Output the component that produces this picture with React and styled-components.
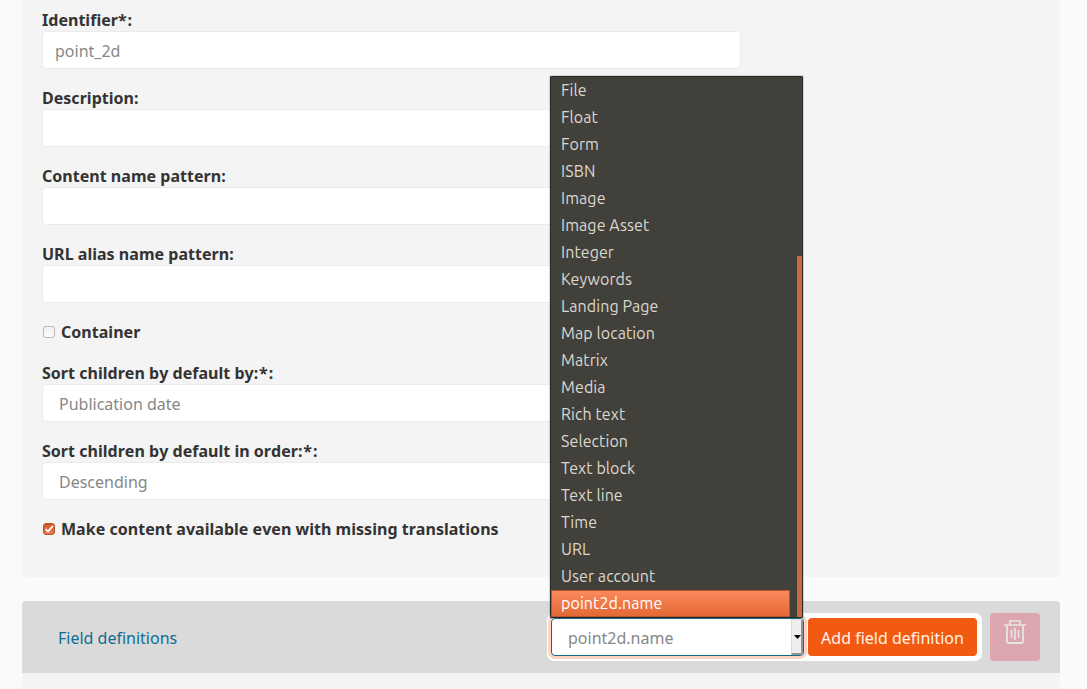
import React from "react";
import styled, { createGlobalStyle, css } from "styled-components";

const GlobalStyle = createGlobalStyle`
  *, *::before, *::after { box-sizing: border-box; }
  body {
    margin: 0;
    background: #fafafa;
    color: #333;
    font: 16px/24px "Noto Sans", sans-serif;
    overflow: hidden;
  }
`;

const Page = styled.main`
  height: 689px;
  padding: 0 27px 0 22px;
  overflow: hidden;
`;

const FormPanel = styled.section`
  height: 577px;
  padding: 7px 20px 0;
  background: #f4f4f4;
  border-radius: 0 0 4px 4px;
`;

const Field = styled.div`
  width: 699px;
  margin-bottom: 16px;
`;

const Label = styled.label`
  display: block;
  height: 24px;
  padding-top: 1px;
  font-weight: 700;
  font-kerning: none;
  letter-spacing: 0.025px;
  white-space: nowrap;
`;

const Required = styled.span`
  letter-spacing: 0.9px;
`;

const Control = styled.div`
  height: 38px;
  padding: 7px ${(p) => (p.$select ? "16px" : "12px")};
  color: #878787;
  background: #fff;
  border: 1px solid #ebebeb;
  border-radius: 4px;
`;

const CheckRow = styled.div`
  display: flex;
  align-items: center;
  gap: 6px;
  height: 24px;
  padding-left: 1px;
  margin-bottom: ${(p) => p.$gap || "0"};
`;

const CheckBox = styled.span`
  display: flex;
  width: 12px;
  height: 12px;
  margin-top: 2px;
  border: 1px solid #b9b9b9;
  border-radius: 3px;
  background: linear-gradient(#f1f1f1, #fdfdfd);
  ${(p) =>
    p.$checked &&
    css`
      border-color: #b0502c;
      background: linear-gradient(#d65624, #e57a50);
    `}
`;

const DefinitionsPanel = styled.section`
  height: 100px;
  margin-top: 24px;
  background: #f4f4f4;
  border-radius: 4px 4px 0 0;
`;

const DefinitionsHeader = styled.header`
  display: flex;
  align-items: center;
  height: 72px;
  padding: 0 20px 0 36px;
  background: #dadada;
  border-radius: 4px 4px 0 0;
`;

const Title = styled.h2`
  flex: 1;
  margin: 0;
  padding-top: 2px;
  color: #0f6d95;
  font-size: 16px;
  font-weight: 400;
`;

const AddGroup = styled.div`
  position: relative;
  display: flex;
  align-items: center;
  gap: 4px;
  width: 435px;
  height: 48px;
  margin-right: 8px;
  padding: 0 5px 0 4px;
  background: #fff;
  border-radius: 7px;
`;

const TypeSelect = styled.div`
  display: flex;
  width: 253px;
  height: 38px;
  color: #878787;
  background: #fff;
  border: 1px solid #146c8c;
  border-radius: 4px;
  box-shadow: 0 0 0 3px #fcd4c1;
  overflow: hidden;
`;

const SelectValue = styled.span`
  flex: 1;
  padding: 7px 16px;
`;

const SelectArrow = styled.span`
  display: flex;
  align-items: center;
  justify-content: center;
  width: 12px;
  padding-left: 1px;
  background: #eeeeee;
  border: solid;
  border-width: 1px 2px 2px 1px;
  border-color: #e3e3e3 #949494 #949494 #dcdcdc;
`;

const AddButton = styled.button`
  width: 169px;
  height: 38px;
  padding: 2px 0 0;
  color: #fff2e9;
  background: #f35a11;
  border: 0;
  border-radius: 4px;
  font: inherit;
  white-space: nowrap;
`;

const DeleteButton = styled.button`
  display: flex;
  justify-content: center;
  width: 50px;
  height: 48px;
  padding: 7px 0 0;
  background: #dca6ae;
  border: 0;
  border-radius: 4px;
`;

const Menu = styled.ul`
  position: absolute;
  left: 3px;
  bottom: 43px;
  width: 253px;
  height: 542px;
  margin: 0;
  padding: 0 12px 0 0;
  list-style: none;
  color: #dcd8cf;
  background: #42403b;
  border: 1px solid #282a29;
  border-radius: 1px;
  box-shadow: 0 0 1px 1px rgba(80, 90, 95, 0.22);
`;

const MenuItem = styled.li`
  height: 27px;
  padding: 1px 0 0 10px;
  line-height: 25px;
  font-family: Ubuntu, "Noto Sans", sans-serif;
  letter-spacing: 0.08px;
  white-space: nowrap;
  ${(p) =>
    p.$active &&
    css`
      padding: 0 0 0 9px;
      color: #fff;
      background: linear-gradient(#fa895c, #e46936);
      border: 1px solid #b75732;
    `}
`;

const MenuScrollbar = styled.span`
  position: absolute;
  top: 179px;
  right: 0;
  bottom: 0;
  width: 5px;
  background: #cb6a41;
`;

const fieldTypes = [
  "File", "Float", "Form", "ISBN", "Image", "Image Asset", "Integer",
  "Keywords", "Landing Page", "Map location", "Matrix", "Media", "Rich text",
  "Selection", "Text block", "Text line", "Time", "URL", "User account",
  "point2d.name",
];

const CheckMark = () => (
  <svg width="10" height="10" viewBox="0 0 10 10" fill="none" stroke="#fff" strokeWidth="1.8">
    <path d="M1.5 5.2 4 7.5 9 1.8" />
  </svg>
);

const TrashIcon = () => (
  <svg width="22" height="24" viewBox="0 0 22 24" fill="none" stroke="#e6e4e4">
    <path d="M0 5H22M6 5V1H16V5" strokeWidth="1.7" />
    <path d="M3 5V21.5Q3 23 4.5 23H17.5Q19 23 19 21.5V5" strokeWidth="1.8" />
    <path d="M7.5 10V18M11 8V20M14.5 10V18" strokeWidth="1.7" />
  </svg>
);

const FormField = ({ label, suffix, value, select }) => (
  <Field>
    <Label>
      {label}
      {suffix && <Required>{suffix}</Required>}
    </Label>
    <Control $select={select}>{value}</Control>
  </Field>
);

export default function App() {
  return (
    <>
      <GlobalStyle />
      <Page>
        <FormPanel>
          <FormField label="Identifier" suffix="*:" value="point_2d" />
          <FormField label="Description:" />
          <FormField label="Content name pattern:" />
          <FormField label="URL alias name pattern:" />
          <CheckRow $gap="17px">
            <CheckBox />
            <Label>Container</Label>
          </CheckRow>
          <FormField label="Sort children by default by" suffix=":*:" value="Publication date" select />
          <FormField label="Sort children by default in order" suffix=":*:" value="Descending" select />
          <CheckRow>
            <CheckBox $checked>
              <CheckMark />
            </CheckBox>
            <Label>Make content available even with missing translations</Label>
          </CheckRow>
        </FormPanel>
        <DefinitionsPanel>
          <DefinitionsHeader>
            <Title>Field definitions</Title>
            <AddGroup>
              <TypeSelect>
                <SelectValue>point2d.name</SelectValue>
                <SelectArrow>
                  <svg width="7" height="4" viewBox="0 0 7 4">
                    <path d="M0 0H7L3.5 4Z" fill="#000" />
                  </svg>
                </SelectArrow>
              </TypeSelect>
              <AddButton>Add field definition</AddButton>
              <Menu>
                {fieldTypes.map((name) => (
                  <MenuItem key={name} $active={name === "point2d.name"}>
                    {name}
                  </MenuItem>
                ))}
                <MenuScrollbar />
              </Menu>
            </AddGroup>
            <DeleteButton aria-label="Delete">
              <TrashIcon />
            </DeleteButton>
          </DefinitionsHeader>
        </DefinitionsPanel>
      </Page>
    </>
  );
}
